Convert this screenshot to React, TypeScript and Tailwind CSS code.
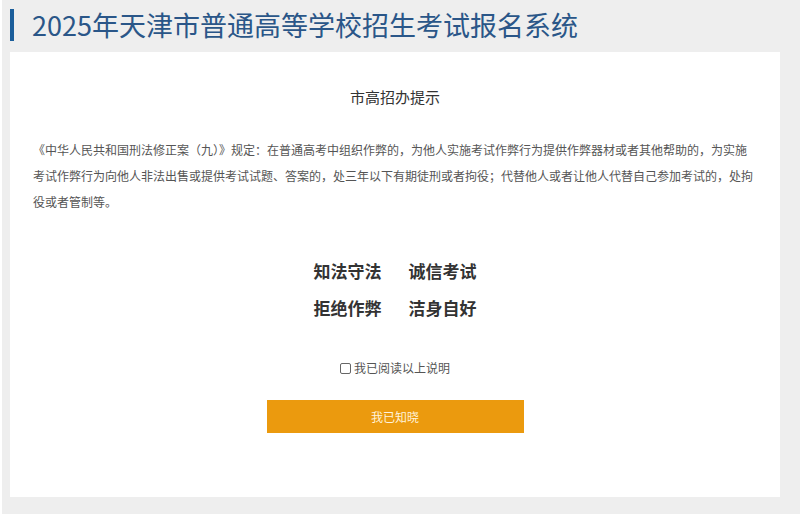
import React from "react";

export default function App() {
  const font = { fontFamily: '"Noto Sans CJK SC", "Noto Sans", sans-serif' };
  return (
    <div className="w-[800px] h-[519px] bg-white" style={font}>
      <div className="ml-[2px] h-[514px] bg-[#eeeeee] pt-[9px] pl-[8px] pr-[20px]">
        <div className="flex items-center h-[32px]">
          <div className="w-[4px] h-[32px] bg-[#1b5e9b]" />
          <h1 className="ml-[18px] text-[27px] leading-[32px] text-[#2a5688] font-normal whitespace-nowrap">
            2025年天津市普通高等学校招生考试报名系统
          </h1>
        </div>
        <div className="mt-[11px] w-[770px] h-[445px] bg-white pt-[35px] pl-[23px]">
          <div className="w-[724px] text-center text-[15px] leading-[20px] text-[#333333]">
            市高招办提示
          </div>
          <p className="mt-[30px] w-[724px] text-[12px] leading-[26px] text-[#555555]">
            《中华人民共和国刑法修正案（九）》规定：在普通高考中组织作弊的，为他人实施考试作弊行为提供作弊器材或者其他帮助的，为实施考试作弊行为向他人非法出售或提供考试试题、答案的，处三年以下有期徒刑或者拘役；代替他人或者让他人代替自己参加考试的，处拘役或者管制等。
          </p>
          <div className="mt-[37px] w-[724px] flex flex-col items-center text-[17px] leading-[37px] font-bold text-[#333333]">
            <div className="flex gap-[27px]">
              <span>知法守法</span>
              <span>诚信考试</span>
            </div>
            <div className="flex gap-[27px]">
              <span>拒绝作弊</span>
              <span>洁身自好</span>
            </div>
          </div>
          <div className="mt-[32px] w-[724px] flex justify-center">
            <label className="flex items-center gap-[2px] h-[20px] text-[12px] text-[#555555]">
              <input
                type="checkbox"
                className="appearance-none w-[11px] h-[11px] border border-[#666666] rounded-[2px] bg-white"
              />
              <span className="ml-[1px]">我已阅读以上说明</span>
            </label>
          </div>
          <div className="mt-[22px] w-[770px] -ml-[23px] flex justify-center">
            <button className="w-[257px] h-[33px] bg-[#eb9a0e] text-[12px] text-[#fff3dc]">
              我已知晓
            </button>
          </div>
        </div>
      </div>
    </div>
  );
}
